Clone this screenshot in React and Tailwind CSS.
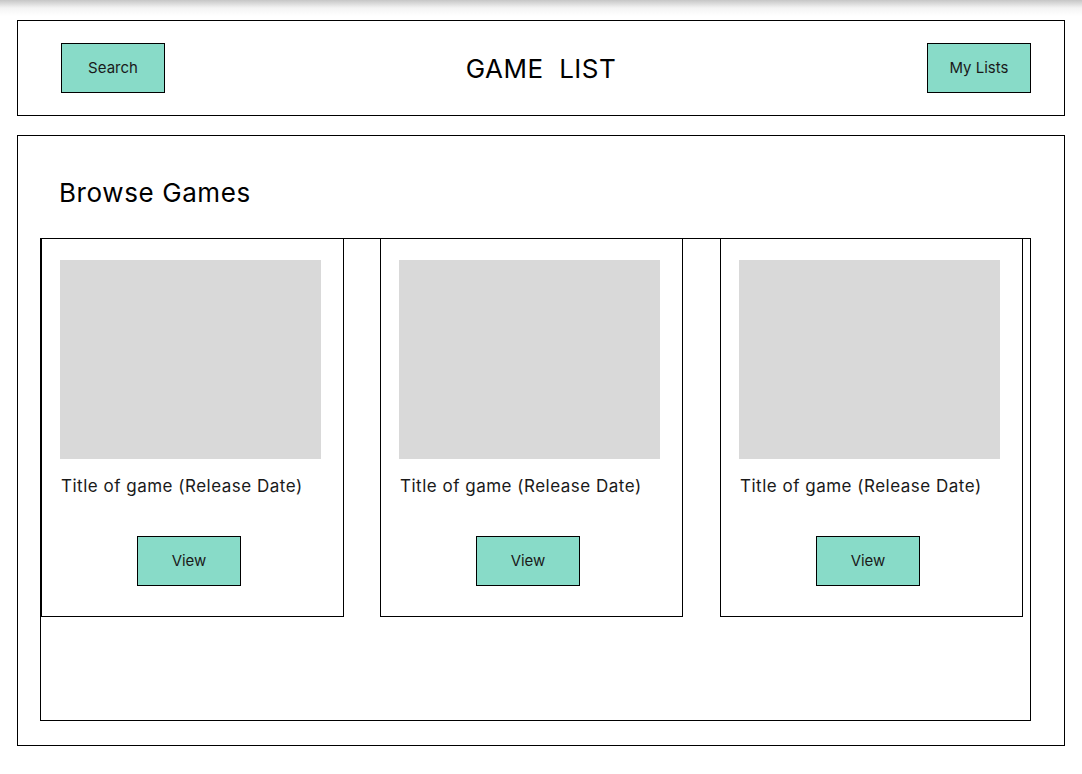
import React from "react";

const games = [1, 2, 3];

const Btn = ({ children, className = "" }) => (
	<button
		className={`w-[104px] h-[50px] bg-[#88dbc8] border border-black text-[15px] text-[#1a1a1a] ${className}`}
	>
		{children}
	</button>
);

const GameCard = () => (
	<div className="w-[303px] h-[379px] border border-black bg-white flex flex-col shrink-0">
		<div className="mt-[21px] ml-[18px] w-[261px] h-[199px] bg-[#d9d9d9]" />
		<p className="mt-[16px] ml-[19px] text-[17px] tracking-[0.5px] text-[#1a1a1a] leading-[22px]">
			Title of game (Release Date)
		</p>
		<div className="mt-[39px] pl-[95px]">
			<Btn className="h-[49px]">View</Btn>
		</div>
	</div>
);

export default function App() {
	return (
		<div
			className="w-[1082px] h-[774px] bg-[linear-gradient(to_bottom,#c6c6c6_0px,#f4f4f4_8px,#ffffff_16px)] overflow-hidden"
			style={{ fontFamily: "Inter, 'Noto Sans', sans-serif" }}
		>
			<div className="pt-[20px] pl-[17px] flex flex-col gap-[19px]">
				{/* header */}
				<div className="w-[1048px] h-[96px] border border-black bg-white flex items-center justify-between pl-[43px] pr-[33px]">
					<Btn>Search</Btn>
					<h1 className="mr-[10px] text-[26px] tracking-[0.5px] text-black whitespace-pre">
						GAME  LIST
					</h1>
					<Btn>My Lists</Btn>
				</div>

				{/* main */}
				<div className="w-[1048px] h-[611px] border border-black bg-white flex flex-col pl-[22px]">
					<h2 className="mt-[41px] ml-[19px] text-[26px] tracking-[0.6px] leading-[32px] text-black">
						Browse Games
					</h2>
					<div className="mt-[29px] w-[991px] h-[483px] border border-black flex gap-[36px] items-start">
						{games.map((g) => (
							<div key={g} className="-mt-px last:ml-px">
								<GameCard />
							</div>
						))}
					</div>
				</div>
			</div>
		</div>
	);
}
